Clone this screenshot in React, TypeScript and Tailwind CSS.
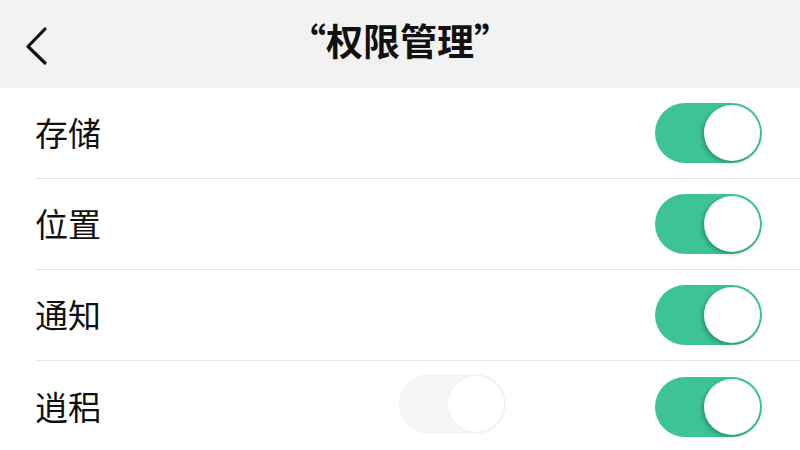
import { useState } from "react";

type Perm = { name: string; on: boolean };

const perms: Perm[] = [
  { name: "存储", on: true },
  { name: "位置", on: true },
  { name: "通知", on: true },
  { name: "逍稆", on: true },
];

const Toggle = ({
  on,
  muted = false,
  onClick,
}: {
  on: boolean;
  muted?: boolean;
  onClick?: () => void;
}) => (
  <button
    onClick={onClick}
    className={`relative w-[107px] h-[60px] rounded-full transition-colors ${
      muted ? "bg-[#f5f5f5]" : on ? "bg-[#3cc497]" : "bg-[#e5e5e5]"
    }`}
  >
    <span
      className={`absolute top-[2px] w-[56px] h-[56px] rounded-full bg-white transition-all ${
        muted
          ? "shadow-[0_0_2px_rgba(0,0,0,0.08)]"
          : "shadow-[-2px_2px_4px_rgba(0,0,0,0.25)]"
      } ${on ? "left-[49px]" : "left-[2px]"}`}
    />
  </button>
);

const App = () => {
  const [items, setItems] = useState(perms);

  const flip = (i: number) =>
    setItems((prev) => prev.map((p, j) => (j === i ? { ...p, on: !p.on } : p)));

  return (
    <div
      className="w-[800px] h-[450px] bg-white overflow-hidden flex flex-col"
      style={{ fontFamily: '"Noto Sans CJK SC", "Noto Sans", sans-serif' }}
    >
      <div className="h-[88px] shrink-0 bg-[#f2f2f2] relative flex items-center justify-center">
        <svg
          className="absolute left-[24px] top-[26px]"
          width="26"
          height="40"
          viewBox="0 0 26 40"
          fill="none"
        >
          <path
            d="M21 3L4 20.5L21 37"
            stroke="#111"
            strokeWidth="3.2"
            strokeLinecap="round"
            strokeLinejoin="round"
          />
        </svg>
        <h1 className="text-[37px] font-bold text-[#111] leading-none -mt-[8px]">
          “权限管理”
        </h1>
      </div>

      <div className="flex flex-col pl-[35px]">
        {items.map((p, i) => (
          <div
            key={p.name}
            className={`h-[91px] shrink-0 flex items-center justify-between pr-[38px] ${
              i < items.length - 1 ? "border-b border-[#e6e6e6]" : ""
            }`}
          >
            <span className="text-[33px] text-[#111]">{p.name}</span>
            <div className="flex items-center">
              {i === items.length - 1 && (
                <div className="mr-[149px]">
                  <Toggle on muted />
                </div>
              )}
              <Toggle on={p.on} onClick={() => flip(i)} />
            </div>
          </div>
        ))}
      </div>
    </div>
  );
};

export default App;
